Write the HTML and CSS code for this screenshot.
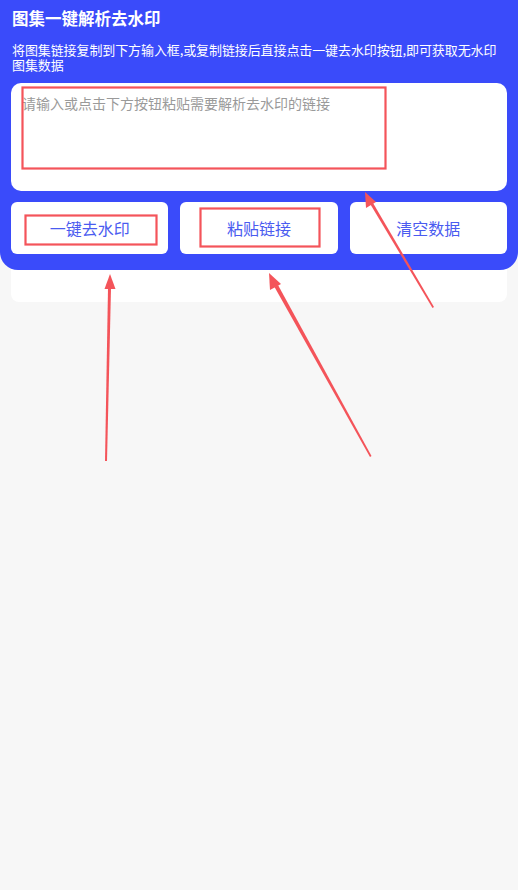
FILE: index.html
```html
<!DOCTYPE html>
<html lang="zh-CN">
<head>
<meta charset="utf-8">
<title>图集一键解析去水印</title>
<link rel="stylesheet" href="styles.css">
</head>
<body>
<div class="page">
  <header class="hero">
    <h1 class="title">图集一键解析去水印</h1>
    <p class="desc">将图集链接复制到下方输入框,或复制链接后直接点击一键去水印按钮,即可获取无水印图集数据</p>
    <div class="input-card">
      <div class="placeholder">请输入或点击下方按钮粘贴需要解析去水印的链接</div>
    </div>
    <div class="actions">
      <div class="btn">一键去水印</div>
      <div class="btn">粘贴链接</div>
      <div class="btn">清空数据</div>
    </div>
  </header>
  <div class="result-card"></div>

  <svg class="marks" width="518" height="890" viewBox="0 0 518 890" xmlns="http://www.w3.org/2000/svg">
    <g fill="none" stroke="#f4545a" stroke-width="2.2">
      <rect x="22.5" y="87.5" width="363" height="81"/>
      <rect x="25.5" y="215.5" width="131" height="29"/>
      <rect x="200.5" y="208.5" width="119" height="38"/>
    </g>
    <g fill="#f4545a">
      <polygon points="105,461 107,461 111,288 108,288"/>
      <polygon points="110,274 104.5,289 115.5,289"/>
      <polygon points="370,457 371.5,456 278,285 274.5,287"/>
      <polygon points="269,273 270,290 281,284"/>
      <polygon points="432.5,308 434,307 373,203 370.5,204.5"/>
      <polygon points="365,192 366,208 376,202"/>
    </g>
  </svg>
</div>
</body>
</html>
```

FILE: styles.css
```css
html, body {
  margin: 0;
  padding: 0;
}
body {
  background: #f7f7f7;
  font-family: "Noto Sans CJK SC", "Noto Sans", sans-serif;
  width: 518px;
  height: 890px;
  overflow: hidden;
}
.page {
  position: relative;
  width: 518px;
  height: 890px;
}
.hero {
  position: relative;
  z-index: 1;
  background: #3a4bfa;
  border-radius: 0 0 18px 18px;
  padding: 7px 11px 16px;
}
.title {
  margin: 0 0 0 1px;
  color: #ffffff;
  font-size: 16.5px;
  font-weight: 700;
  line-height: 22px;
}
.desc {
  margin: 13px 0 0 1px;
  color: #ffffff;
  font-size: 13px;
  line-height: 15px;
  letter-spacing: -0.1px;
}
.input-card {
  margin-top: 11px;
  height: 108px;
  background: #ffffff;
  border-radius: 10px;
  padding: 10px 12px;
  box-sizing: border-box;
}
.placeholder {
  color: #9a9a9a;
  font-size: 14px;
  line-height: 20px;
  margin-left: -1px;
}
.actions {
  margin-top: 11px;
  display: grid;
  grid-template-columns: 1fr 1fr 1fr;
  gap: 12px;
}
.btn {
  height: 52px;
  background: #ffffff;
  border-radius: 6px;
  display: flex;
  align-items: center;
  justify-content: center;
  color: #4a5bf0;
  font-size: 16px;
  line-height: 20px;
}
.result-card {
  margin: -12px 11px 0;
  height: 44px;
  background: #ffffff;
  border-radius: 8px;
}
.marks {
  position: absolute;
  left: 0;
  top: 0;
  z-index: 2;
  pointer-events: none;
}
```
